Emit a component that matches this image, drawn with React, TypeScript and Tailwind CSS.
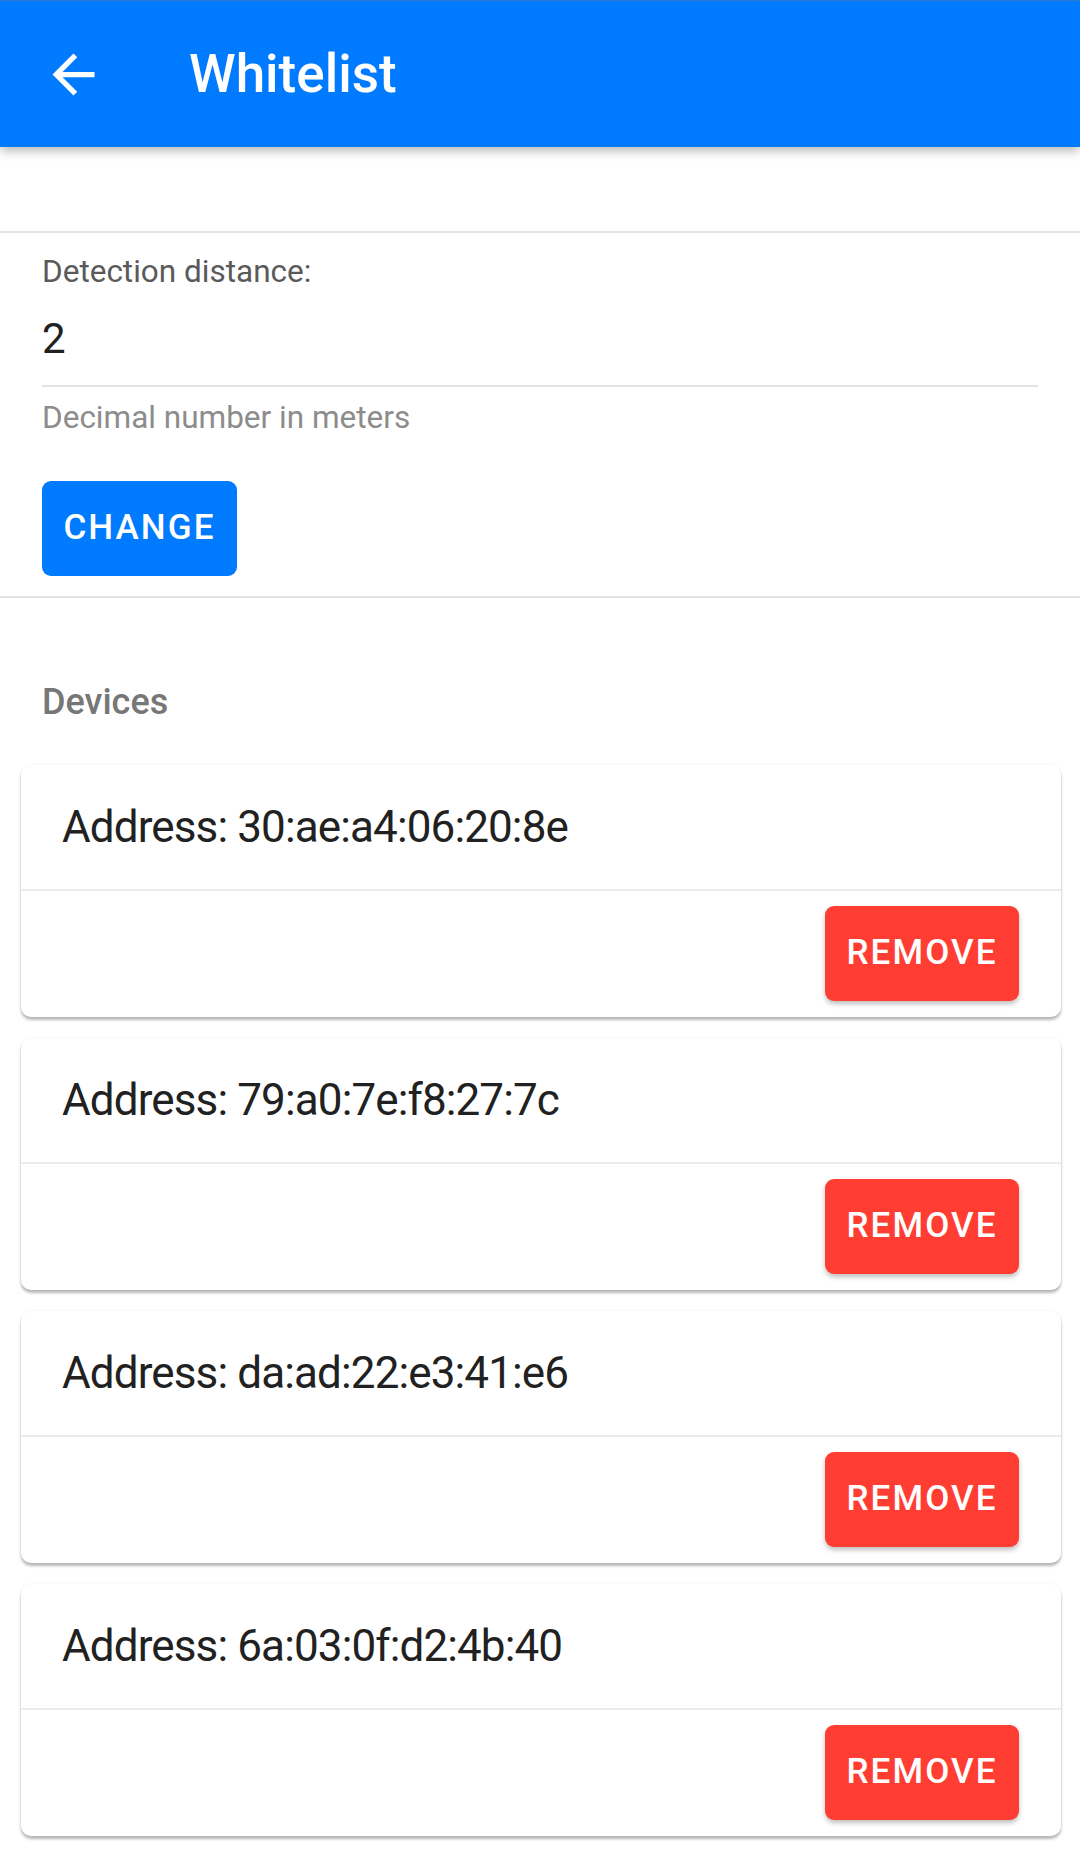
import { useState } from "react";

const devices = [
  "30:ae:a4:06:20:8e",
  "79:a0:7e:f8:27:7c",
  "da:ad:22:e3:41:e6",
  "6a:03:0f:d2:4b:40",
];

const ArrowBack = () => (
  <svg viewBox="0 0 24 24" className="w-[63px] h-[63px]" fill="white">
    <path d="M20 11H7.83l5.59-5.59L12 4l-8 8 8 8 1.41-1.41L7.83 13H20v-2z" />
  </svg>
);

const App = () => {
  const [distance, setDistance] = useState("2");
  const [list, setList] = useState(devices);

  return (
    <div className="min-h-screen bg-white font-['Roboto',sans-serif]">
      {/* Toolbar */}
      <header className="relative z-10 h-[147px] bg-[#007bff] border-t border-[#2f77c9] flex items-center shadow-[0_4px_10px_rgba(0,0,0,0.28)]">
        <button className="ml-[42px] flex items-center">
          <ArrowBack />
        </button>
        <h1 className="ml-[84px] text-[53px] font-medium text-white leading-none">Whitelist</h1>
      </header>

      <div className="h-[84px]" />
      <div className="h-[2px] bg-[#e3e3e3]" />

      {/* Distance setting */}
      <section className="px-[42px] pt-[21px]">
        <label className="block text-[31.5px] leading-[36px] text-[#5a5a5a]">Detection distance:</label>
        <input
          value={distance}
          onChange={(e) => setDistance(e.target.value)}
          className="mt-[24px] w-full pb-[21px] text-[42px] leading-[50px] text-[#212121] border-b-2 border-[#e3e3e3] outline-none bg-transparent"
        />
        <p className="mt-[13px] text-[31.5px] leading-[36px] text-[#8c8c8c]">Decimal number in meters</p>
        <button className="mt-[45px] h-[95px] w-[195px] rounded-[9px] bg-[#007bff] text-white text-[35px] font-medium tracking-[0.06em]">
          CHANGE
        </button>
      </section>

      <div className="mt-[20px] h-[2px] bg-[#e3e3e3]" />

      {/* Devices */}
      <h2 className="mt-[83px] px-[42px] text-[36px] leading-[42px] font-medium text-[#777777]">Devices</h2>

      <div className="mt-[42px] pl-[21px] pr-[19px] flex flex-col gap-[21px] pb-[20px]">
        {list.map((addr) => (
          <div
            key={addr}
            className="rounded-[10px] bg-white shadow-[0_3px_3px_rgba(0,0,0,0.28),0_0_3px_rgba(0,0,0,0.06)]"
          >
            <div className="px-[41px] py-[36px] text-[44px] leading-[52px] tracking-[-0.02em] text-[#212121]">
              Address: {addr}
            </div>
            <div className="h-[2px] bg-[#ebebeb]" />
            <div className="flex justify-end pr-[42px] pt-[15px] pb-[16px]">
              <button
                onClick={() => setList(list.filter((a) => a !== addr))}
                className="h-[95px] w-[194px] rounded-[9px] bg-[#ff3d33] text-white text-[35px] font-medium tracking-[0.06em] shadow-[0_3px_5px_rgba(0,0,0,0.25)]"
              >
                REMOVE
              </button>
            </div>
          </div>
        ))}
      </div>
    </div>
  );
};

export default App;
